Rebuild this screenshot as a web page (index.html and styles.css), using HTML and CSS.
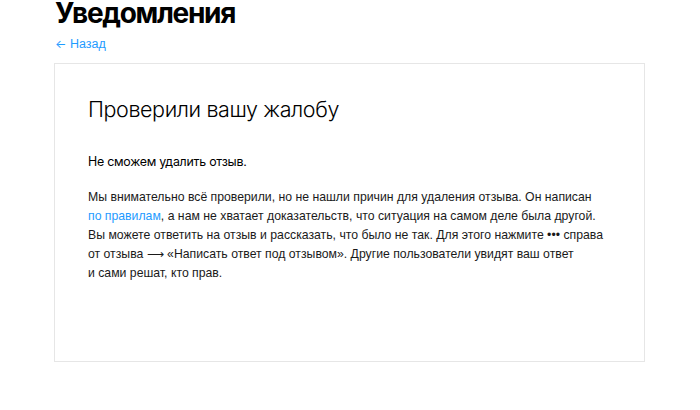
FILE: index.html
```html
<!DOCTYPE html>
<html lang="ru">
<head>
<meta charset="utf-8">
<title>Уведомления</title>
<link rel="stylesheet" href="styles.css">
</head>
<body>
<div class="page">
  <h1 class="page-title">Уведомления</h1>
  <a class="back-link" href="#"><span class="back-arrow">←</span> Назад</a>
  <section class="card">
    <h2 class="card-title">Проверили вашу жалобу</h2>
    <p class="lead">Не сможем удалить отзыв.</p>
    <p class="text">Мы внимательно всё проверили, но не нашли причин для удаления отзыва. Он написан<br><a class="link" href="#">по правилам</a>, а нам не хватает доказательств, что ситуация на самом деле была другой.<br>Вы можете ответить на отзыв и рассказать, что было не так. Для этого нажмите ••• справа<br>от отзыва ⟶ «Написать ответ под отзывом». Другие пользователи увидят ваш ответ<br>и сами решат, кто прав.</p>
  </section>
</div>
</body>
</html>
```
FILE: styles.css
```css
html, body {
  margin: 0;
  padding: 0;
  background: #fff;
}
.page {
  padding: 0 55px 0 54px;
  display: flex;
  flex-direction: column;
  align-items: flex-start;
}
.page-title {
  margin: -4px 0 0 1px;
  font-family: Inter, "Noto Sans", sans-serif;
  font-weight: 700;
  font-size: 28px;
  line-height: 34px;
  color: #000;
  letter-spacing: -1.3px;
}
.back-link {
  margin: 6px 0 0 1px;
  font-family: "Liberation Sans", Arial, sans-serif;
  font-size: 12.5px;
  line-height: 16px;
  color: #1e9bff;
  text-decoration: none;
}
.back-arrow {
  font-family: Inter, "Noto Sans", sans-serif;
  font-size: 12px;
}
.card {
  box-sizing: border-box;
  align-self: stretch;
  margin-top: 11px;
  width: 591px;
  height: 299px;
  border: 1px solid #e6e6e6;
  padding: 30px 33px;
}
.card-title {
  margin: 0;
  font-family: Inter, "Noto Sans", sans-serif;
  font-weight: 300;
  font-size: 21.5px;
  line-height: 30px;
  color: #000;
  letter-spacing: -0.4px;
}
.lead {
  margin: 29px 0 0;
  font-family: Inter, "Noto Sans", sans-serif;
  font-size: 12.4px;
  line-height: 18px;
  color: #000;
  letter-spacing: -0.25px;
}
.text {
  margin: 17px 0 0;
  font-family: "Liberation Sans", Arial, sans-serif;
  font-size: 12.25px;
  line-height: 19px;
  color: #1a1a1a;
  white-space: nowrap;
}
.link {
  color: #1e9bff;
  text-decoration: none;
}
```
